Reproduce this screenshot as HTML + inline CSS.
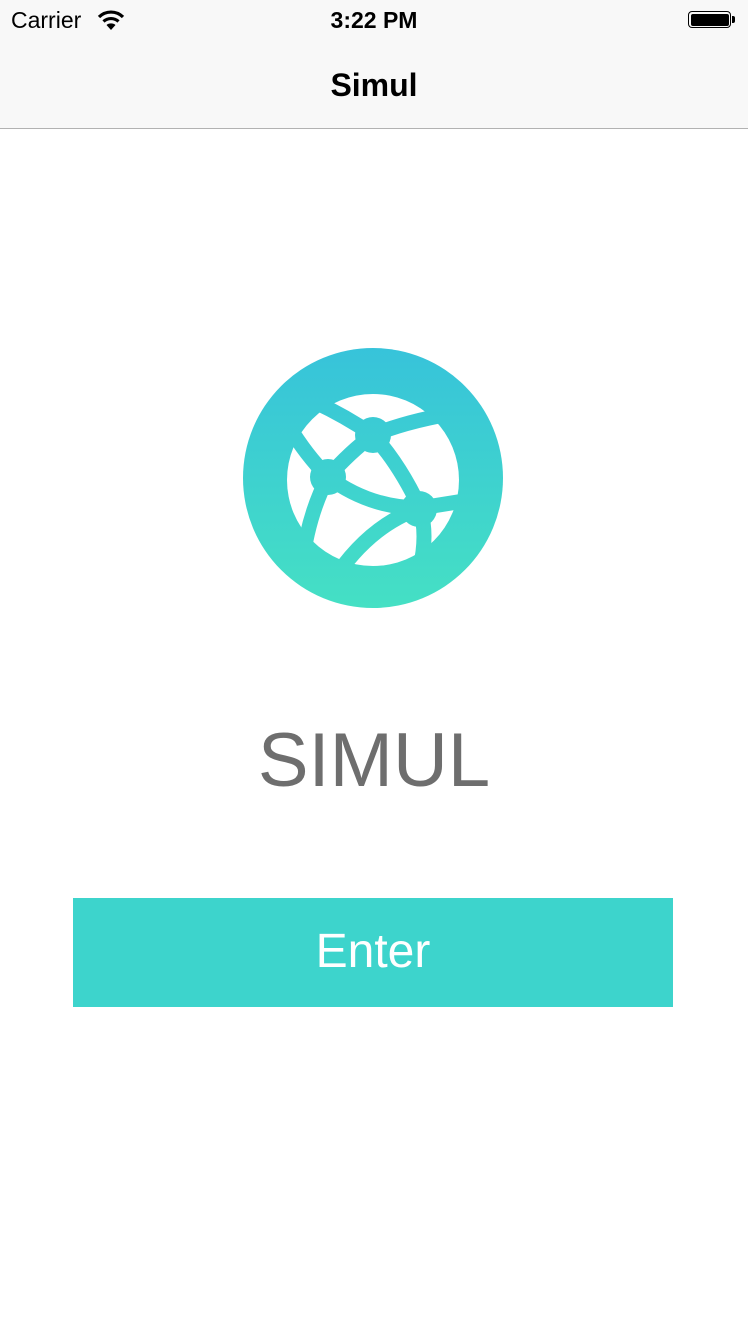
<!DOCTYPE html>
<html><head><meta charset="utf-8"><style>
body{margin:0;width:748px;height:1334px;background:#fff;font-family:"Liberation Sans",sans-serif;position:relative;overflow:hidden}
.bar{position:absolute;left:0;top:0;width:748px;height:128px;background:#f8f8f8;border-bottom:1px solid #b2b2b2}
.t{position:absolute;white-space:nowrap}
</style></head><body>
<div class="bar"></div>
<div class="t" style="left:11px;top:7px;font-size:23px;color:#000">Carrier</div>
<svg style="position:absolute;left:97px;top:9px" width="28" height="22" viewBox="0 0 28 22"><path d="M2 8 A17 17 0 0 1 26 8" stroke="#000" stroke-width="3.2" fill="none"/><path d="M6.5 12.5 A11 11 0 0 1 21.5 12.5" stroke="#000" stroke-width="3.2" fill="none"/><path d="M14 21 L9.5 16 A7 7 0 0 1 18.5 16 Z" fill="#000"/></svg>
<div class="t" style="left:0;width:748px;text-align:center;top:7px;font-size:23px;font-weight:bold;color:#000">3:22 PM</div>
<div style="position:absolute;left:688px;top:11px;width:43px;height:17px;border:1.5px solid #000;border-radius:4px;box-sizing:border-box;padding:1.5px"><div style="width:100%;height:100%;background:#000;border-radius:2px"></div></div>
<div style="position:absolute;left:732px;top:16px;width:3px;height:7px;background:#000;border-radius:0 2px 2px 0"></div>
<div class="t" style="left:0;width:748px;text-align:center;top:67px;font-size:32px;font-weight:bold;color:#000">Simul</div>
<svg style="position:absolute;left:0;top:0" width="748" height="700">
<defs><linearGradient id="g" gradientUnits="userSpaceOnUse" x1="0" y1="348" x2="0" y2="608"><stop offset="0" stop-color="#37c3da"/><stop offset="1" stop-color="#45e0c4"/></linearGradient></defs>
<circle cx="373" cy="478" r="130" fill="url(#g)"/>
<circle cx="373" cy="480" r="86" fill="#fff"/>
<g stroke="url(#g)" stroke-width="15" fill="none" stroke-linecap="round">
<path d="M315 402 Q345 416 373 435 Q410 420 462 412"/>
<path d="M288 425 Q306 455 328 477 Q350 452 373 435"/>
<path d="M373 435 Q400 465 420 508"/>
<path d="M328 477 Q370 508 420 508 L470 500"/>
<path d="M328 477 Q308 515 302 565"/>
<path d="M420 508 Q368 526 332 582"/>
<path d="M420 508 Q428 535 420 568"/>
</g>
<g fill="url(#g)"><circle cx="373" cy="435" r="18"/><circle cx="328" cy="477" r="18"/><circle cx="419" cy="509" r="18"/></g>
</svg>
<div class="t" style="left:0;width:748px;text-align:center;top:717px;font-size:76px;color:#6e6e6e;letter-spacing:0px">SIMUL</div>
<div style="position:absolute;left:73px;top:898px;width:600px;height:109px;background:#3dd4cc"></div>
<div class="t" style="left:73px;width:600px;text-align:center;top:924px;font-size:48px;color:#fff">Enter</div>
</body></html>
